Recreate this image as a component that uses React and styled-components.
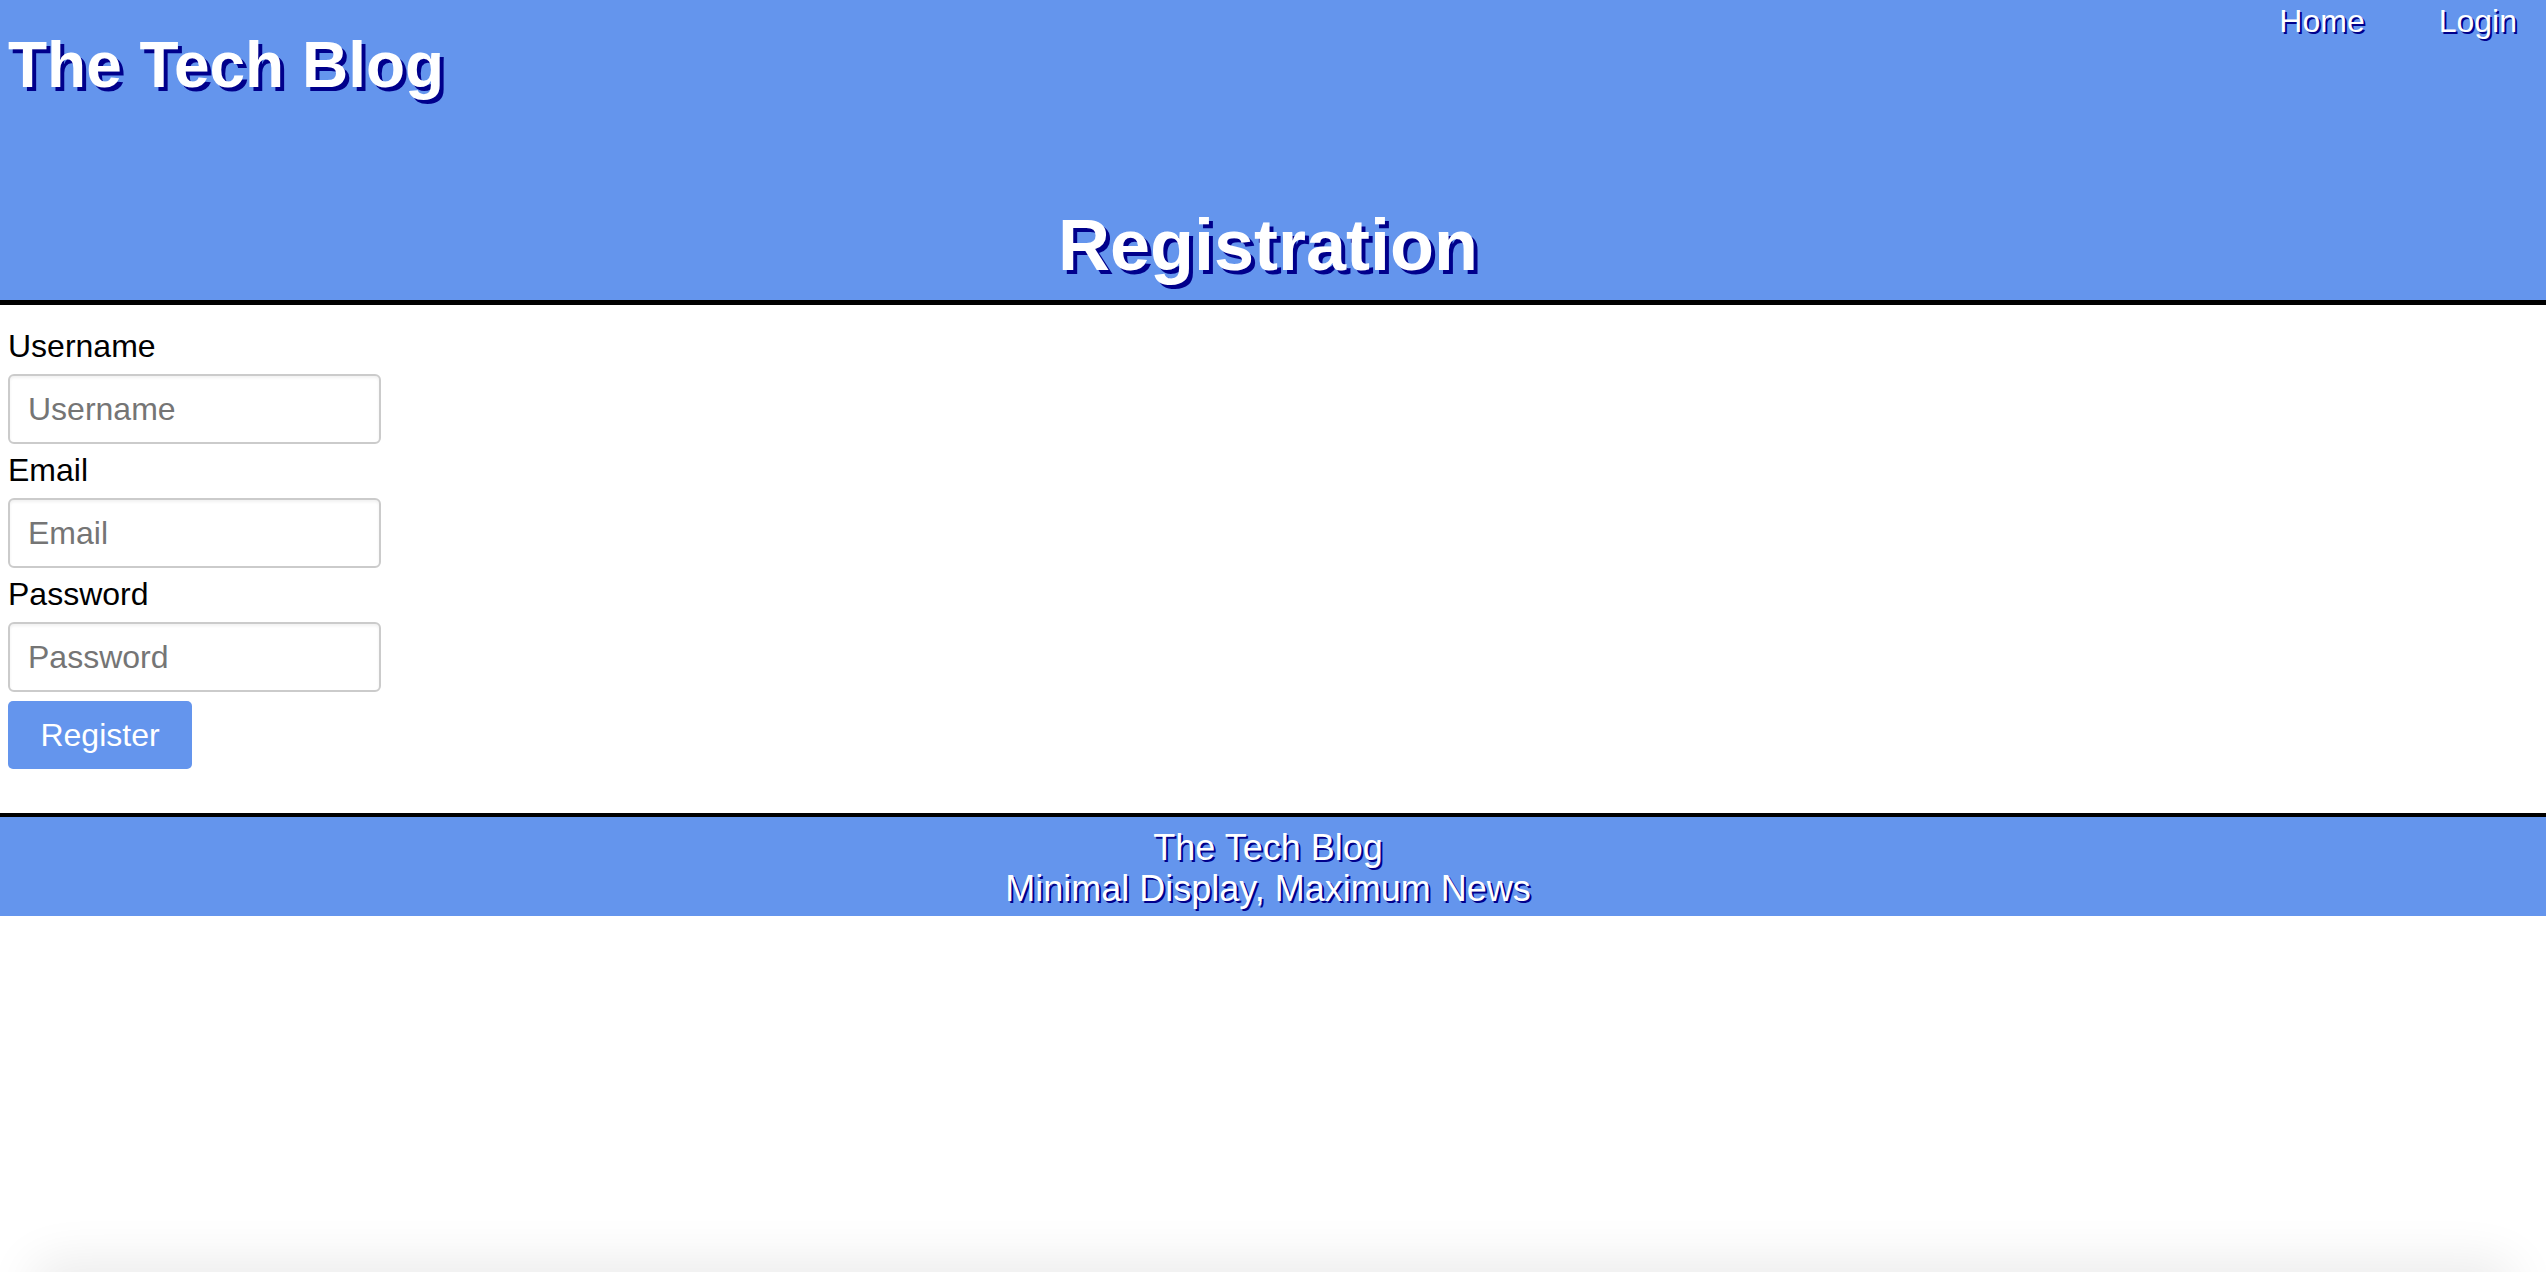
import styled, { createGlobalStyle } from 'styled-components';

const GlobalStyle = createGlobalStyle`
  html, body {
    margin: 0;
    padding: 0;
    background: #ffffff;
    font-family: "Liberation Sans", Arial, Helvetica, sans-serif;
    color: #000000;
  }
`;

const Header = styled.header`
  background-color: #6495ed;
  border-bottom: 5px solid #000000;
  padding: 0 8px 13px;
`;

const TopRow = styled.div`
  display: flex;
  justify-content: space-between;
  align-items: flex-start;
`;

const SiteTitle = styled.h1`
  margin: 28px 0 0;
  font-size: 64px;
  font-weight: 700;
  line-height: 74px;
  color: #ffffff;
  text-shadow: 4px 4px 0 #00008b;
`;

const Nav = styled.nav`
  display: flex;
  gap: 74px;
  margin: 3px 21px 0 0;
`;

const NavLink = styled.a`
  font-size: 32px;
  line-height: 37px;
  color: #ffffff;
  text-decoration: none;
  text-shadow: 2px 2px 0 #00008b;
  cursor: pointer;
`;

const PageTitle = styled.h2`
  margin: 102px 0 0;
  padding-right: 10px;
  text-align: center;
  font-size: 72px;
  font-weight: 700;
  line-height: 83px;
  color: #ffffff;
  text-shadow: 4px 4px 0 #00008b;
`;

const Main = styled.main`
  padding: 23px 8px 44px;
`;

const Form = styled.form`
  margin: 0;
`;

const Label = styled.label`
  display: block;
  font-size: 32px;
  line-height: 37px;
`;

const Input = styled.input`
  display: block;
  box-sizing: border-box;
  width: 373px;
  height: 70px;
  margin: 9px 0 8px;
  padding: 0 18px;
  font-family: inherit;
  font-size: 32px;
  border: 2px solid #cbcbcb;
  border-radius: 6px;
  box-shadow: inset 0 2px 3px rgba(0, 0, 0, 0.06);
  outline: none;

  &::placeholder {
    color: #757575;
  }
`;

const Button = styled.button`
  display: block;
  box-sizing: border-box;
  width: 184px;
  height: 68px;
  margin-top: 9px;
  padding: 0;
  font-family: inherit;
  font-size: 32px;
  color: #ffffff;
  background-color: #6495ed;
  border: none;
  border-radius: 5px;
  cursor: pointer;
`;

const Footer = styled.footer`
  border-top: 4px solid #000000;
  background-color: #6495ed;
  padding: 10px 10px 7px 0;
  text-align: center;
  color: #ffffff;
  font-size: 36px;
  line-height: 41px;
  text-shadow: 2px 2px 0 #00008b;
`;

const FooterLine = styled.div``;

// soft shadow from the window edge at the bottom of the viewport
const BottomShade = styled.div`
  position: fixed;
  left: 40px;
  right: 40px;
  bottom: -30px;
  height: 30px;
  border-radius: 30px;
  box-shadow: 0 0 50px 10px rgba(0, 0, 0, 0.09);
  pointer-events: none;
`;

const fields = [
  { id: 'username', label: 'Username', type: 'text' },
  { id: 'email', label: 'Email', type: 'email' },
  { id: 'password', label: 'Password', type: 'password' },
];

const App = () => {
  return (
    <>
      <GlobalStyle />
      <Header>
        <TopRow>
          <SiteTitle>The Tech Blog</SiteTitle>
          <Nav>
            <NavLink href="#">Home</NavLink>
            <NavLink href="#">Login</NavLink>
          </Nav>
        </TopRow>
        <PageTitle>Registration</PageTitle>
      </Header>

      <Main>
        <Form onSubmit={(e) => e.preventDefault()}>
          {fields.map((field) => (
            <div key={field.id}>
              <Label htmlFor={field.id}>{field.label}</Label>
              <Input id={field.id} type={field.type} placeholder={field.label} />
            </div>
          ))}
          <Button type="submit">Register</Button>
        </Form>
      </Main>

      <Footer>
        <FooterLine>The Tech Blog</FooterLine>
        <FooterLine>Minimal Display, Maximum News</FooterLine>
      </Footer>
      <BottomShade />
    </>
  );
};

export default App;
